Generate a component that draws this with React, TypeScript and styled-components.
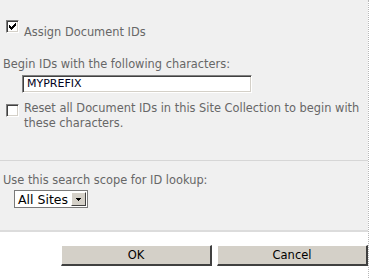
import styled, { createGlobalStyle } from 'styled-components';

const GlobalStyle = createGlobalStyle`
  html, body {
    margin: 0;
    padding: 0;
    background: #ffffff;
  }
`;

const Page = styled.div`
  width: 368px;
  height: 278px;
  display: flex;
  flex-direction: column;
  border-right: 1px dotted #b8b8b8;
  font-family: Verdana, "DejaVu Sans", sans-serif;
  font-size: 11.4px;
  color: #676767;
`;

const Panel = styled.div`
  height: 230px;
  background: #f0f0f0;
  border-bottom: 2px solid #dcdcdc;
  display: flex;
  flex-direction: column;
`;

const Group = styled.div<{ $top: number; $bottom: number }>`
  padding: ${(p) => p.$top}px 0 ${(p) => p.$bottom}px 3px;
  display: flex;
  flex-direction: column;
`;

const Divider = styled.div`
  height: 1px;
  background: #d6d6d6;
`;

const CheckRow = styled.label<{ $offset: number }>`
  display: flex;
  align-items: flex-start;
  gap: 5px;
  padding-left: 3px;
  line-height: 15px;

  span.text {
    margin-top: ${(p) => p.$offset}px;
  }
`;

const Box = styled.span`
  flex: none;
  width: 11px;
  height: 11px;
  background: #ffffff;
  border-top: 1px solid #808080;
  border-left: 1px solid #808080;
  border-bottom: 1px solid #ffffff;
  border-right: 1px solid #ffffff;
  box-shadow: inset 1px 1px 0 #404040, inset -1px -1px 0 #d4d0c8;
  display: flex;
  align-items: center;
  justify-content: center;
`;

const FieldLabel = styled.div`
  line-height: 15px;
`;

const TextBox = styled.div`
  margin: 3px 0 0 19px;
  width: 224px;
  height: 14px;
  background: #ffffff;
  border-top: 1px solid #808080;
  border-left: 1px solid #808080;
  border-bottom: 1px solid #ffffff;
  border-right: 1px solid #ffffff;
  box-shadow: inset 1px 1px 0 #404040, inset -1px -1px 0 #d4d0c8;
  padding: 1px 0 1px 4px;
  color: #000020;
  font-size: 11px;
  line-height: 14px;
`;

const Select = styled.div`
  margin: 2px 0 0 11px;
  display: inline-flex;
  align-items: center;
  align-self: flex-start;
  height: 14px;
  padding: 1px;
  background: #ffffff;
  border: 1px solid #7a7a7a;
  color: #000000;
  font-size: 12.5px;

  span.value {
    padding: 0 3px 0 2px;
  }
`;

const Arrow = styled.span`
  width: 15px;
  height: 14px;
  box-sizing: border-box;
  background: #d4d0c8;
  border-top: 1px solid #ffffff;
  border-left: 1px solid #ffffff;
  border-bottom: 1px solid #404040;
  border-right: 1px solid #404040;
  display: flex;
  align-items: center;
  justify-content: center;
`;

const Footer = styled.div`
  flex: 1;
  display: flex;
  justify-content: flex-end;
  align-items: flex-start;
  gap: 5px;
  padding-top: 13px;
`;

const Button = styled.button`
  width: 151px;
  height: 21px;
  padding: 0;
  background: #d4d0c8;
  border-top: 1px solid #ffffff;
  border-left: 1px solid #ffffff;
  border-bottom: 2px solid #404040;
  border-right: 2px solid #404040;
  font-family: Tahoma, "DejaVu Sans", sans-serif;
  font-size: 11.5px;
  color: #000000;
`;

function Check() {
  return (
    <svg width="7" height="7" viewBox="0 0 7 7">
      <path d="M0 2h1v1h1v1h1v-1h1v-1h1v-1h1v-1h1v3h-1v1h-1v1h-1v1h-1v1h-1v-1h-1v-1h-1z" fill="#000" />
    </svg>
  );
}

export default function App() {
  return (
    <Page>
      <GlobalStyle />
      <Panel>
        <Group $top={20} $bottom={0}>
          <CheckRow $offset={5}>
            <Box>
              <Check />
            </Box>
            <span className="text">Assign Document IDs</span>
          </CheckRow>
        </Group>
        <Group $top={17} $bottom={0}>
          <FieldLabel>Begin IDs with the following characters:</FieldLabel>
          <TextBox>MYPREFIX</TextBox>
        </Group>
        <Group $top={11} $bottom={29}>
          <CheckRow $offset={-3}>
            <Box />
            <span className="text">
              Reset all Document IDs in this Site Collection to begin with
              <br />
              these characters.
            </span>
          </CheckRow>
        </Group>
        <Divider />
        <Group $top={12} $bottom={0}>
          <FieldLabel>Use this search scope for ID lookup:</FieldLabel>
          <Select>
            <span className="value">All Sites</span>
            <Arrow>
              <svg width="5" height="3" viewBox="0 0 5 3">
                <path d="M0 0h5v1h-1v1h-1v1h-1v-1h-1v-1h-1z" fill="#000" />
              </svg>
            </Arrow>
          </Select>
        </Group>
      </Panel>
      <Footer>
        <Button>OK</Button>
        <Button>Cancel</Button>
      </Footer>
    </Page>
  );
}
